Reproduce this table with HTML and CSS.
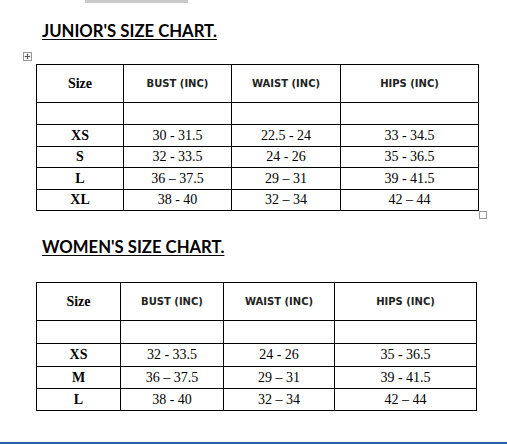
FILE: index.html
```html
<!DOCTYPE html>
<html>
<head>
<meta charset="utf-8">
<link rel="stylesheet" href="styles.css">
</head>
<body>
<div class="topbar"></div>
<div class="page">
  <h2 class="title t1">JUNIOR'S SIZE CHART.</h2>
  <div class="chart c1">
    <span class="move-handle">
      <svg width="9" height="9" viewBox="0 0 9 9">
        <rect x="0.5" y="0.5" width="8" height="8" fill="#fff" stroke="#9a9a9a"/>
        <path d="M4.5 2v5M2 4.5h5" stroke="#555" stroke-width="1"/>
        <path d="M4.5 1.5l-1 1h2zM4.5 7.5l-1-1h2zM1.5 4.5l1-1v2zM7.5 4.5l-1-1v2z" fill="#555"/>
      </svg>
    </span>
    <table class="sizes junior">
      <tr class="head"><th class="c-size">Size</th><th class="c-bust">BUST (INC)</th><th class="c-waist">WAIST (INC)</th><th class="c-hips">HIPS (INC)</th></tr>
      <tr class="r22"><td></td><td></td><td></td><td></td></tr>
      <tr class="r22"><th>XS</th><td>30 - 31.5</td><td>22.5 - 24</td><td>33 - 34.5</td></tr>
      <tr class="r21"><th>S</th><td>32 - 33.5</td><td>24 - 26</td><td>35 - 36.5</td></tr>
      <tr class="r22"><th>L</th><td>36 – 37.5</td><td>29 – 31</td><td>39 - 41.5</td></tr>
      <tr class="r21"><th>XL</th><td>38 - 40</td><td>32 – 34</td><td>42 – 44</td></tr>
    </table>
    <span class="resize-handle"></span>
  </div>

  <h2 class="title t2">WOMEN'S SIZE CHART.</h2>
  <div class="chart c2">
    <table class="sizes women">
      <tr class="head"><th class="c-size">Size</th><th class="c-bust">BUST (INC)</th><th class="c-waist">WAIST (INC)</th><th class="c-hips">HIPS (INC)</th></tr>
      <tr class="r23"><td></td><td></td><td></td><td></td></tr>
      <tr class="r23"><th>XS</th><td>32 - 33.5</td><td>24 - 26</td><td>35 - 36.5</td></tr>
      <tr class="r22"><th>M</th><td>36 – 37.5</td><td>29 – 31</td><td>39 - 41.5</td></tr>
      <tr class="r22"><th>L</th><td>38 - 40</td><td>32 – 34</td><td>42 – 44</td></tr>
    </table>
  </div>
</div>
<div class="page-edge"></div>
</body>
</html>
```

FILE: styles.css
```css
html, body {
  margin: 0;
  padding: 0;
  background: #fff;
}
body {
  font-family: "Liberation Serif", "Times New Roman", serif;
  color: #000;
  overflow: hidden;
  height: 444px;
}
.topbar {
  margin-left: 85px;
  width: 103px;
  height: 3px;
  background: #c9c9c9;
}
.page {
  padding-left: 36px;
}
.title {
  margin: 0 0 0 6px;
  font-family: Lato, "Open Sans", sans-serif;
  font-weight: 700;
  font-size: 16.7px;
  line-height: 20px;
  text-decoration: underline;
  text-decoration-thickness: 1px;
  text-underline-offset: 2px;
  color: #000;
}
.t1 { padding-top: 18px; }
.t2 { margin-top: 26px; }
.chart {
  position: relative;
  width: max-content;
}
.c1 { margin-top: 23px; }
.c2 { margin-top: 25px; }
.move-handle {
  position: absolute;
  left: -13px;
  top: -12px;
  width: 9px;
  height: 9px;
  display: block;
}
.move-handle svg { display: block; }
.resize-handle {
  position: absolute;
  left: 443px;
  top: 147px;
  width: 8px;
  height: 8px;
  box-sizing: border-box;
  border: 1px solid #9a9a9a;
  background: #fff;
}
.sizes {
  border-collapse: separate;
  border-spacing: 0;
  table-layout: fixed;
  border-left: 1px solid #000;
  border-top: 1px solid #000;
}
.sizes th, .sizes td {
  box-sizing: border-box;
  border-right: 1px solid #000;
  border-bottom: 1px solid #000;
  padding: 0;
  text-align: center;
  vertical-align: middle;
  font-size: 14px;
  line-height: 16px;
}
.sizes th { font-weight: 700; }
.sizes td { font-weight: 400; }
.head th {
  font-family: "DejaVu Sans", Verdana, sans-serif;
  font-size: 10px;
  color: #222;
}
.head th.c-size {
  font-family: "Liberation Serif", "Times New Roman", serif;
  font-size: 14px;
  color: #000;
}
.junior { width: 443px; }
.junior .c-size { width: 87px; }
.junior .c-bust { width: 108px; }
.junior .c-waist { width: 109px; }
.junior .c-hips { width: 138px; }
.women { width: 441px; }
.women .c-size { width: 84px; }
.women .c-bust { width: 103px; }
.women .c-waist { width: 111px; }
.women .c-hips { width: 142px; }
.head { height: 38px; }
.r21 { height: 21px; }
.r22 { height: 22px; }
.r23 { height: 23px; }
.page-edge {
  position: absolute;
  left: 0;
  right: 0;
  top: 442px;
  height: 2px;
  background: #2e5ca8;
}
```
